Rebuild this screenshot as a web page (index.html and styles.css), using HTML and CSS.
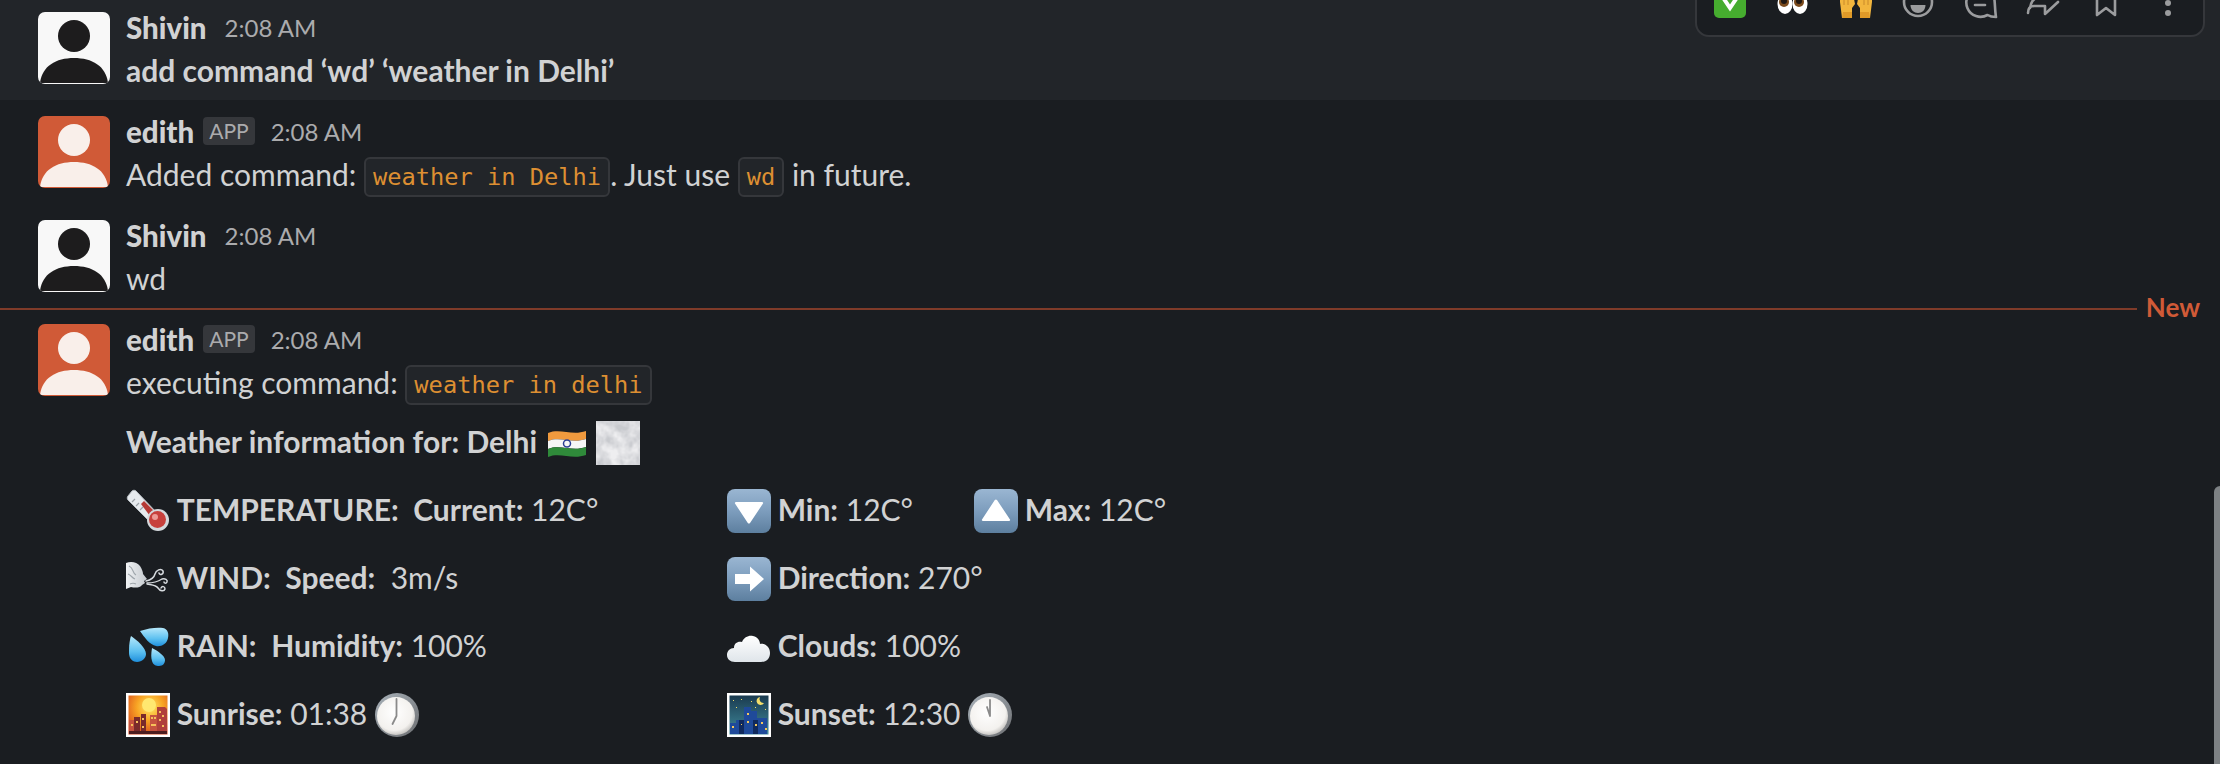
FILE: index.html
```html
<!DOCTYPE html>
<html lang="en">
<head>
<meta charset="utf-8">
<title>Slack messages</title>
<link rel="stylesheet" href="styles.css">
</head>
<body>
<svg class="sprite" aria-hidden="true">
  <defs>
    <linearGradient id="btn" x1="0" y1="0" x2="0" y2="1"><stop offset="0" stop-color="#9ab6d2"/><stop offset=".5" stop-color="#7d9dbd"/><stop offset="1" stop-color="#5d7f9f"/></linearGradient>
    <linearGradient id="drop" x1="0" y1="0" x2="0" y2="1"><stop offset="0" stop-color="#b5e8fb"/><stop offset=".6" stop-color="#5cc0f0"/><stop offset="1" stop-color="#1f8fdc"/></linearGradient>
    <radialGradient id="dawn" cx=".55" cy=".3" r=".75"><stop offset="0" stop-color="#ffe86a"/><stop offset=".45" stop-color="#f8a524"/><stop offset="1" stop-color="#d8451c"/></radialGradient>
    <linearGradient id="night" x1="0" y1="0" x2="0" y2="1"><stop offset="0" stop-color="#1a3a4f"/><stop offset="1" stop-color="#3f8a9c"/></linearGradient>
    <radialGradient id="face" cx=".45" cy=".4" r=".6"><stop offset="0" stop-color="#fff"/><stop offset=".8" stop-color="#f3f1ee"/><stop offset="1" stop-color="#c9c7c4"/></radialGradient>
    <linearGradient id="rim" x1="0" y1="0" x2="1" y2="1"><stop offset="0" stop-color="#a9b2ba"/><stop offset="1" stop-color="#6d6f72"/></linearGradient>
    <linearGradient id="cloudfill" x1="0" y1="0" x2="0" y2="1"><stop offset="0" stop-color="#fff"/><stop offset="1" stop-color="#dfe5ea"/></linearGradient>
    <linearGradient id="headfill" x1="0" y1="0" x2="1" y2="0"><stop offset="0" stop-color="#f0f2f4"/><stop offset="1" stop-color="#c4c9ce"/></linearGradient>
    <filter id="mist" x="0" y="0" width="100%" height="100%"><feTurbulence type="fractalNoise" baseFrequency=".08" numOctaves="3" seed="7"/><feColorMatrix values="0 0 0 0 .58  0 0 0 0 .59  0 0 0 0 .62  1.700 1.700 0 0 -1.250"/></filter>
  </defs>
  <symbol id="person" viewBox="0 0 72 72">
    <ellipse cx="36" cy="24" rx="16" ry="16"/>
    <path d="M2 71c2-17 16-25 34-25s32 8 34 25z"/>
  </symbol>
  <symbol id="down" viewBox="0 0 44 44"><rect width="44" height="44" rx="8" fill="url(#btn)"/><path d="M9 13h26a1 1 0 0 1 1 1.500L23 34a1.500 1.500 0 0 1-2.200 0L8 14.500A1 1 0 0 1 9 13z" fill="#fff"/></symbol>
  <symbol id="up" viewBox="0 0 44 44"><rect width="44" height="44" rx="8" fill="url(#btn)"/><path d="M9 32h26a1 1 0 0 0 1-1.500L23 11a1.500 1.500 0 0 0-2.200 0L8 30.500A1 1 0 0 0 9 32z" fill="#fff"/></symbol>
  <symbol id="right" viewBox="0 0 44 44"><rect width="44" height="44" rx="8" fill="url(#btn)"/><path d="M8 17h15V9.500L37 22 23 34.500V27H8z" fill="#fff"/></symbol>
  <symbol id="flag" viewBox="0 0 44 44">
    <path d="M3 12c12-5 24 3 38-2v8c-14 5-26-3-38 2z" fill="#f09a3e"/>
    <path d="M3 20c12-5 24 3 38-2v8c-14 5-26-3-38 2z" fill="#f6f6f6"/>
    <path d="M3 28c12-5 24 3 38-2v8c-14 5-26-3-38 2z" fill="#2f8a3a"/>
    <circle cx="22" cy="22.500" r="3.500" fill="none" stroke="#2b3f95" stroke-width="1.500"/>
  </symbol>
  <symbol id="mistimg" viewBox="0 0 44 44"><rect width="44" height="44" fill="#eeeef0"/><rect width="44" height="44" filter="url(#mist)"/></symbol>
  <symbol id="thermo" viewBox="0 0 44 44">
    <path d="M2 7l4-5c1-1 3-1 4 0l22 23-8 8L2 11c-1-1-1-3 0-4z" fill="#e6eaee" stroke="#b6bcc1"/>
    <path d="M6 13l3-3M10 17l3-3M14 21l3-3" stroke="#9aa1a7" stroke-width="1.200"/>
    <path d="M15 15l3-3 14 14-5 5z" fill="#b53a36"/>
    <circle cx="32" cy="31" r="11" fill="#d4d9dd"/>
    <circle cx="31.500" cy="30.500" r="8.500" fill="#c7403c"/>
    <circle cx="29" cy="28" r="3" fill="#ec9a95"/>
  </symbol>
  <symbol id="wind" viewBox="0 0 44 44">
    <path d="M0 6c5-2 11-1 14 3 2 3 3 6 3 8l4 5-3 2 1 2-3 2c-2 3-7 3-11 2l-5 2z" fill="url(#headfill)"/>
    <path d="M3 9c5 2 3 7 7 9M2 17c3 1 4 4 7 5M4 27c2-1 4-1 6 0" fill="none" stroke="#9ea5ab" stroke-width="1.200"/>
    <g fill="none" stroke="#d7dbdf" stroke-width="1.500" stroke-linecap="round">
      <path d="M20 24c5-1 8-3 9-7 1-4 6-6 8-3 1 3-3 5-4 2"/>
      <path d="M21 26c6 0 12-2 15-4 3-1 6 1 5 3-1 2-3 1-3 0"/>
      <path d="M21 27c5 1 9 1 11 4 2 3 6 4 7 1 0-3-3-3-4-1"/>
    </g>
  </symbol>
  <symbol id="drops" viewBox="0 0 44 44">
    <path d="M5 11c-2 6-2 13-2 17 0 6 4 9 8 9 5 0 9-4 9-8 0-6-9-14-15-18z" fill="url(#drop)"/>
    <path d="M26 23c-1 6-1 10 0 13 1 4 4 5 7 5 4 0 6-3 6-6 0-4-7-9-13-12z" fill="url(#drop)"/>
    <path d="M14 6c8-3 18-4 23-3 5 1 6 6 5 10-1 6-7 9-12 8-6-1-12-9-16-15z" fill="url(#drop)"/>
  </symbol>
  <symbol id="cloud" viewBox="0 0 44 44"><path d="M8 37c-5 0-8-3-8-7s3-7 7-7c0-5 4-7 8-6 2-5 7-7 11-6 5 1 7 5 7 8 5-1 10 3 10 9s-4 9-9 9z" fill="url(#cloudfill)"/></symbol>
  <symbol id="sunrise" viewBox="0 0 44 44">
    <rect width="44" height="44" fill="#fff"/><rect x="2.500" y="2.500" width="39" height="39" fill="url(#dawn)"/>
    <circle cx="23" cy="12" r="7" fill="#ffe870"/>
    <path d="M3 41V27h5v14zM24 41V22h7v19z" fill="#c6533f"/>
    <path d="M8 41V24h6v17zM15 41V21h5v20z" fill="#7a2a2b"/>
    <path d="M31 41V14h8l2 2v25z" fill="#b0403a"/>
    <path d="M25 24h2v2h-2zM28 24h2v2h-2zM33 18h2v2h-2zM36 22h2v2h-2zM33 26h2v2h-2zM10 28h2v2h-2zM16 25h2v2h-2zM25 31h5v2h-5zM5 31h2v2H5zM16 33h2v2h-2zM36 32h2v2h-2z" fill="#f6c15b"/>
    <rect x="3" y="38" width="38" height="3" fill="#4d1d1f"/>
  </symbol>
  <symbol id="sunset" viewBox="0 0 44 44">
    <rect width="44" height="44" fill="#fff"/><rect x="2.500" y="2.500" width="39" height="39" fill="url(#night)"/>
    <path d="M33 4a4 4 0 1 0 4 6 4 4 0 0 1-4-6z" fill="#f3de6a"/>
    <path d="M6 7h1v1H6zM14 6h1v1h-1zM24 8h1v1h-1zM9 14h1v1H9zM28 14h1v1h-1zM38 16h1v1h-1z" fill="#f3de6a"/>
    <path d="M3 41V30h6v-3h5v5h3V14h7v4h6v7h10v16z" fill="#1f4a9a"/>
    <path d="M12 27h5v14h-5zM26 27h5v14h-5z" fill="#102a5e"/>
    <path d="M5 33h2v2H5zM14 31h1v1h-1zM20 20h2v2h-2zM20 28h2v2h-2zM28 31h2v2h-2zM34 29h2v2h-2zM38 35h2v2h-2z" fill="#f3c85d"/>
  </symbol>
  <symbol id="clock7" viewBox="0 0 44 44"><circle cx="22" cy="22" r="22" fill="url(#rim)"/><circle cx="21" cy="23" r="19" fill="url(#face)"/><path d="M21.500 6v17M21.500 23l-4 8" stroke="#8a8a8a" stroke-width="1.800" stroke-linecap="round"/></symbol>
  <symbol id="clock12" viewBox="0 0 44 44"><circle cx="22" cy="22" r="22" fill="url(#rim)"/><circle cx="21" cy="23" r="19" fill="url(#face)"/><path d="M22 7v16M22 23l-3-9" stroke="#8a8a8a" stroke-width="1.800" stroke-linecap="round"/></symbol>
</svg>

<main class="feed">
  <article class="msg msg-hover">
    <svg class="avatar avatar-user"><use href="#person"/></svg>
    <div class="content">
      <div class="head"><b class="name">Shivin</b><time class="time">2:08 AM</time></div>
      <p class="body bold">add command ‘wd’ ‘weather in Delhi’</p>
    </div>
  </article>
  <article class="msg">
    <svg class="avatar avatar-app"><use href="#person"/></svg>
    <div class="content">
      <div class="head"><b class="name">edith</b><span class="badge">APP</span><time class="time">2:08 AM</time></div>
      <p class="body">Added command: <code class="code">weather in Delhi</code>. Just use <code class="code">wd</code> in future.</p>
    </div>
  </article>
  <article class="msg msg-before-divider">
    <svg class="avatar avatar-user"><use href="#person"/></svg>
    <div class="content">
      <div class="head"><b class="name">Shivin</b><time class="time">2:08 AM</time></div>
      <p class="body">wd</p>
    </div>
  </article>
  <div class="divider"><span class="divider-line"></span><span class="divider-label">New</span></div>
  <article class="msg msg-last">
    <svg class="avatar avatar-app"><use href="#person"/></svg>
    <div class="content">
      <div class="head"><b class="name">edith</b><span class="badge">APP</span><time class="time">2:08 AM</time></div>
      <p class="body">executing command: <code class="code">weather in delhi</code></p>
      <p class="weather-title"><b>Weather information for: Delhi</b> <svg class="emoji"><use href="#flag"/></svg> <svg class="emoji"><use href="#mistimg"/></svg></p>
      <div class="fields">
        <p class="field"><svg class="emoji"><use href="#thermo"/></svg> <b>TEMPERATURE:&nbsp; Current:</b> 12C°</p>
        <p class="field"><svg class="emoji"><use href="#down"/></svg> <b>Min:</b> 12C°</p>
        <p class="field"><svg class="emoji"><use href="#up"/></svg> <b>Max:</b> 12C°</p>
        <p class="field"><svg class="emoji"><use href="#wind"/></svg> <b>WIND:&nbsp; Speed:</b>&nbsp; 3m/s</p>
        <p class="field field-wide"><svg class="emoji"><use href="#right"/></svg> <b>Direction:</b> 270°</p>
        <p class="field"><svg class="emoji"><use href="#drops"/></svg> <b>RAIN:&nbsp; Humidity:</b> 100%</p>
        <p class="field field-wide"><svg class="emoji"><use href="#cloud"/></svg> <b>Clouds:</b> 100%</p>
        <p class="field"><svg class="emoji"><use href="#sunrise"/></svg> <b>Sunrise:</b> 01:38 <svg class="emoji"><use href="#clock7"/></svg></p>
        <p class="field field-wide"><svg class="emoji"><use href="#sunset"/></svg> <b>Sunset:</b> 12:30 <svg class="emoji"><use href="#clock12"/></svg></p>
      </div>
    </div>
  </article>
</main>

<div class="toolbar">
  <span class="tool"><svg class="tool-icon" viewBox="0 0 36 36"><rect x="2" y="2" width="32" height="32" rx="5" fill="#46ad2f"/><path d="M10 12l8 12 8-12" fill="none" stroke="#fff" stroke-width="4"/></svg></span>
  <span class="tool"><svg class="tool-icon" viewBox="0 0 36 36"><ellipse cx="10" cy="20" rx="7.500" ry="10" fill="#fff"/><ellipse cx="25" cy="20" rx="7.500" ry="10" fill="#fff"/><circle cx="9" cy="18" r="5" fill="#7a4a1c"/><circle cx="24" cy="18" r="5" fill="#7a4a1c"/><circle cx="9" cy="17" r="3" fill="#1f1712"/><circle cx="24" cy="17" r="3" fill="#1f1712"/></svg></span>
  <span class="tool"><svg class="tool-icon" viewBox="0 0 36 36"><path d="M5 34L3 18V10h13l2 10-3 4v10zM33 34l2-16v-8H22l-2 10 3 4v10z" fill="#f2b53d"/><path d="M6 28h9v6H5zM23 28h9l1 6H23z" fill="#e09a28"/><path d="M7 12v9M11 12v9M27 12v9M31 12v9" stroke="#c98a2a" stroke-width="1"/></svg></span>
  <span class="tool"><svg class="tool-icon" viewBox="0 0 36 36"><circle cx="18" cy="18" r="14" fill="none" stroke="#9b9c9e" stroke-width="2.600"/><path d="M10.500 21h15c0 5-3.500 8-7.500 8s-7.500-3-7.500-8z" fill="#9b9c9e"/></svg></span>
  <span class="tool"><svg class="tool-icon" viewBox="0 0 36 36"><path d="M31.500 16c.5 4 .5 11 1.500 17-3 0-6-.5-8.500-2A14.200 14.200 0 1 1 31.500 16z" fill="none" stroke="#9b9c9e" stroke-width="2.600" stroke-linejoin="round"/><path d="M12 21h10" stroke="#9b9c9e" stroke-width="2.600" stroke-linecap="round"/></svg></span>
  <span class="tool"><svg class="tool-icon" viewBox="0 0 36 36"><path d="M3 29c0-4 2-7 6-7h11v8l13-12M5 24c1-6 3-10 8-10" fill="none" stroke="#9b9c9e" stroke-width="2.600" stroke-linecap="round" stroke-linejoin="round"/></svg></span>
  <span class="tool"><svg class="tool-icon" viewBox="0 0 36 36"><path d="M9 4h18v27l-9-7-9 7z" fill="none" stroke="#9b9c9e" stroke-width="2.600" stroke-linejoin="round"/></svg></span>
  <span class="tool"><svg class="tool-icon" viewBox="0 0 36 36"><circle cx="18" cy="19" r="3" fill="#9b9c9e"/><circle cx="18" cy="29" r="3" fill="#9b9c9e"/></svg></span>
</div>
<div class="scrollbar"></div>
</body>
</html>
```
FILE: styles.css
```css
* { box-sizing: border-box; }
html, body { margin: 0; height: 100%; }
body {
  background: #1a1d21;
  color: #d1d2d3;
  font-family: Lato, "Noto Sans", sans-serif;
  font-size: 30px;
  overflow: hidden;
  position: relative;
}
p { margin: 0; }
b { font-weight: 700; }
.sprite { position: absolute; width: 0; height: 0; }
.msg { display: flex; gap: 16px; padding: 16px 0 8px 38px; }
.msg-hover { background: #222529; padding-top: 12px; }
.msg-before-divider { padding-bottom: 0; }
.msg-last { padding-top: 8px; }
.avatar { width: 72px; height: 72px; border-radius: 7px; flex: none; }
.avatar-user { background: #f8f8f8; fill: #1d1c1d; }
.avatar-app { background: #d05a37; fill: #f9efea; }
.content { min-width: 0; }
.head { display: flex; align-items: center; height: 30px; }
.name { font-size: 29.5px; font-weight: 900; }
.time { font-size: 24px; color: #ababad; margin-left: 18px; }
.badge {
  font-size: 21px; color: #ababad; background: #35373b;
  border-radius: 4px; height: 28px; line-height: 28px; padding: 0 6px; margin-left: 9px;
}
.badge + .time { margin-left: 16px; }
.body { margin-top: 6px; line-height: 44px; height: 44px; white-space: nowrap; }
.bold { font-weight: 700; }
.code {
  display: inline-block;
  font-family: "DejaVu Sans Mono", monospace;
  font-size: 23.7px;
  line-height: 36px;
  color: #dd8f32;
  background: #222529;
  border: 2px solid #35373b;
  border-radius: 6px;
  padding: 0 7px;
  vertical-align: 1px;
}
.divider { display: flex; align-items: center; height: 14px; margin-top: 2px; }
.divider-line { flex: 1; height: 2px; background: #7f3b29; }
.divider-label { color: #d05a37; font-size: 26px; font-weight: 700; line-height: 14px; margin: -4px 20px 0 9px; }
.weather-title { margin-top: 15px; height: 44px; line-height: 44px; white-space: nowrap; }
.emoji { width: 44px; height: 44px; vertical-align: middle; margin-top: -4px; }
.field .emoji:first-child { margin-right: -1px; }
.fields { display: grid; grid-template-columns: 601px 247px auto; grid-auto-rows: 68px; margin-top: 12px; }
.field { line-height: 44px; padding-top: 12px; white-space: nowrap; }
.field-wide { grid-column: span 2; }
.toolbar {
  position: absolute; top: -34px; left: 1695px; width: 510px; height: 71px;
  display: flex; align-items: center; padding-left: 2px;
  background: #1a1d21; border: 2px solid #35373b; border-radius: 14px;
}
.tool { flex: none; width: 62.6px; display: flex; justify-content: center; }
.tool-icon { width: 36px; height: 36px; }
.scrollbar {
  position: absolute; right: 0; top: 486px; bottom: 0; width: 6px;
  background: #7d8184; border-radius: 6px 0 0 0;
}
```
